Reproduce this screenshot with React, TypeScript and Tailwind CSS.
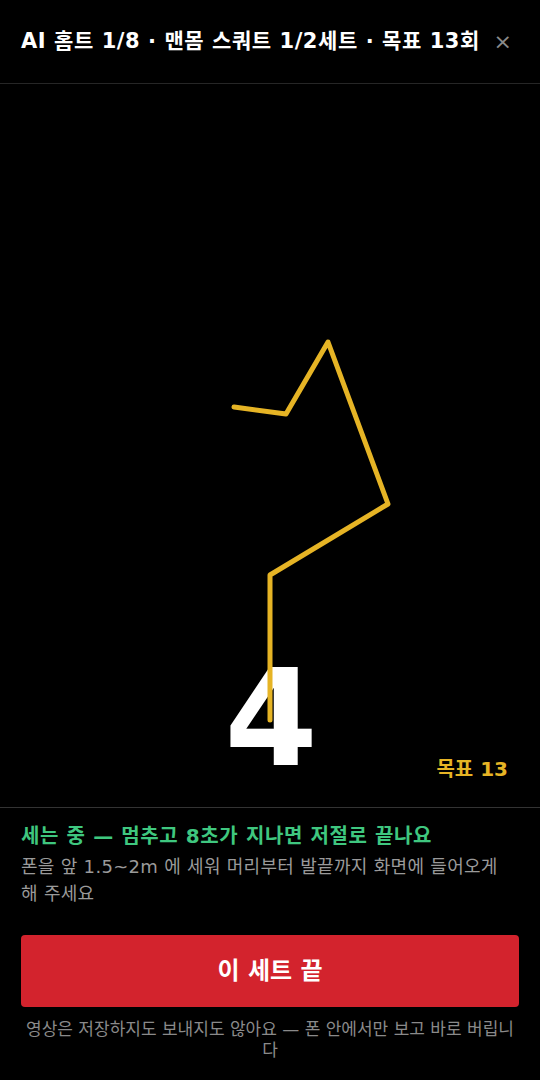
import React from "react";

const FONT = { fontFamily: '"DejaVu Sans", "Noto Sans CJK KR", sans-serif' };

// skeleton points traced from the pose overlay
const POINTS = "234,407 286,414 328,342 388,504 270,575 270,720";

const App: React.FC = () => {
  return (
    <div
      className="w-[540px] h-[1080px] bg-black text-white flex flex-col overflow-hidden"
      style={FONT}
    >
      {/* header */}
      <div className="h-[84px] shrink-0 flex items-center justify-between pl-[21px] pr-[28px] border-b border-[#262626]">
        <h1 className="text-[21px] font-bold tracking-[0.55px] whitespace-nowrap">
          AI 홈트 1/8 · 맨몸 스쿼트 1/2세트 · 목표 13회
        </h1>
        <button className="text-[#8a8a8a] text-[22px] leading-none" aria-label="닫기">
          ×
        </button>
      </div>

      {/* camera / pose area */}
      <div className="relative h-[724px] shrink-0 border-b border-[#333]">
        <div className="absolute left-0 right-0 top-[568px] flex justify-center">
          <span className="text-[134px] font-bold leading-none pl-[2px]">4</span>
        </div>
        <svg
          className="absolute inset-0 pointer-events-none"
          width="540"
          height="723"
          viewBox="0 84 540 723"
        >
          <polyline
            points={POINTS}
            fill="none"
            stroke="#e6b425"
            strokeWidth="5"
            strokeLinejoin="round"
            strokeLinecap="round"
          />
        </svg>
        <div className="absolute right-[32px] bottom-[23px] text-[20px] font-bold text-[#e6b425]">
          목표 13
        </div>
      </div>

      {/* status + action */}
      <div className="shrink-0 px-[21px] pt-[14px]">
        <p className="text-[20px] font-bold tracking-[0.6px] text-[#3fc77f] leading-[28px]">
          세는 중 — 멈추고 8초가 지나면 저절로 끝나요
        </p>
        <p className="mt-[3px] text-[18px] tracking-[0.3px] leading-[27px] text-[#9a9a9a]">
          폰을 앞 1.5~2m 에 세워 머리부터 발끝까지 화면에 들어오게 해 주세요
        </p>
        <button className="mt-[28px] w-full h-[72px] rounded-[4px] bg-[#d3232d] text-[24px] font-bold text-white">
          이 세트 끝
        </button>
        <p className="mt-[12px] text-center text-[17px] leading-[21px] text-[#8a8a8a]">
          영상은 저장하지도 보내지도 않아요 — 폰 안에서만 보고 바로 버립니다
        </p>
      </div>
    </div>
  );
};

export default App;
